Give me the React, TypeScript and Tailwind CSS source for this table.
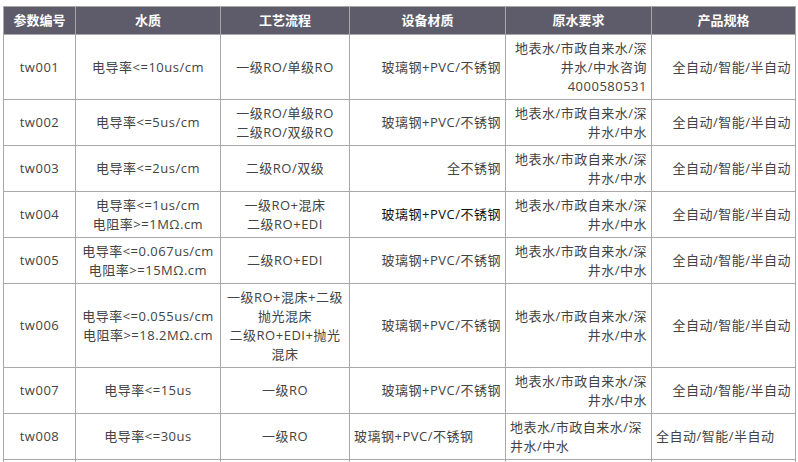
import React from 'react';

type Cell = { lines: string[]; align?: 'left' | 'center' | 'right'; dark?: boolean };

const headers = ['参数编号', '水质', '工艺流程', '设备材质', '原水要求', '产品规格'];

const rawWater = ['地表水/市政自来水/深', '井水/中水'];
const spec = ['全自动/智能/半自动'];
const material = ['玻璃钢+PVC/不锈钢'];

const rows: Cell[][] = [
  [
    { lines: ['tw001'] },
    { lines: ['电导率<=10us/cm'] },
    { lines: ['一级RO/单级RO'] },
    { lines: material, align: 'right' },
    { lines: ['地表水/市政自来水/深', '井水/中水咨询', '4000580531'], align: 'right' },
    { lines: spec, align: 'right' },
  ],
  [
    { lines: ['tw002'] },
    { lines: ['电导率<=5us/cm'] },
    { lines: ['一级RO/单级RO', '二级RO/双级RO'] },
    { lines: material, align: 'right' },
    { lines: rawWater, align: 'right' },
    { lines: spec, align: 'right' },
  ],
  [
    { lines: ['tw003'] },
    { lines: ['电导率<=2us/cm'] },
    { lines: ['二级RO/双级'] },
    { lines: ['全不锈钢'], align: 'right' },
    { lines: rawWater, align: 'right' },
    { lines: spec, align: 'right' },
  ],
  [
    { lines: ['tw004'] },
    { lines: ['电导率<=1us/cm', '电阻率>=1MΩ.cm'] },
    { lines: ['一级RO+混床', '二级RO+EDI'] },
    { lines: material, align: 'right', dark: true },
    { lines: rawWater, align: 'right' },
    { lines: spec, align: 'right' },
  ],
  [
    { lines: ['tw005'] },
    { lines: ['电导率<=0.067us/cm', '电阻率>=15MΩ.cm'] },
    { lines: ['二级RO+EDI'] },
    { lines: material, align: 'right' },
    { lines: rawWater, align: 'right' },
    { lines: spec, align: 'right' },
  ],
  [
    { lines: ['tw006'] },
    { lines: ['电导率<=0.055us/cm', '电阻率>=18.2MΩ.cm'] },
    { lines: ['一级RO+混床+二级', '抛光混床', '二级RO+EDI+抛光', '混床'] },
    { lines: material, align: 'right' },
    { lines: rawWater, align: 'right' },
    { lines: spec, align: 'right' },
  ],
  [
    { lines: ['tw007'] },
    { lines: ['电导率<=15us'] },
    { lines: ['一级RO'] },
    { lines: material, align: 'right' },
    { lines: rawWater, align: 'right' },
    { lines: spec, align: 'right' },
  ],
  [
    { lines: ['tw008'] },
    { lines: ['电导率<=30us'] },
    { lines: ['一级RO'] },
    { lines: material, align: 'left' },
    { lines: rawWater, align: 'left' },
    { lines: spec, align: 'left' },
  ],
];

const alignClass = {
  left: 'text-left',
  center: 'text-center',
  right: 'text-right',
};

export default function App() {
  return (
    <div
      className="min-h-screen bg-white pl-[3px] pt-[6px]"
      style={{ fontFamily: '"Open Sans", "Noto Sans CJK SC", sans-serif' }}
    >
      <table className="w-[792px] table-fixed border-collapse text-[13px] leading-[19px]">
        <colgroup>
          <col className="w-[72px]" />
          <col className="w-[145px]" />
          <col className="w-[129px]" />
          <col className="w-[156px]" />
          <col className="w-[146px]" />
          <col className="w-[144px]" />
        </colgroup>
        <thead>
          <tr className="bg-[#5e5b6a]">
            {headers.map((h) => (
              <th
                key={h}
                className="border border-[#a8a8a8] px-1 py-[4px] text-center font-bold text-white"
              >
                {h}
              </th>
            ))}
          </tr>
        </thead>
        <tbody className="tracking-[0.5px]">
          {rows.map((row, i) => (
            <tr key={i}>
              {row.map((cell, j) => (
                <td
                  key={j}
                  className={`border border-[#a8a8a8] px-1 py-[3.5px] align-middle ${
                    alignClass[cell.align ?? 'center']
                  } ${cell.dark ? 'text-[#111]' : 'text-[#434343]'}`}
                >
                  {cell.lines.map((line, k) => (
                    <div key={k} className="whitespace-nowrap">
                      {line}
                    </div>
                  ))}
                </td>
              ))}
            </tr>
          ))}
          <tr className="h-[46px]">
            {headers.map((h) => (
              <td key={h} className="border border-[#a8a8a8]" />
            ))}
          </tr>
        </tbody>
      </table>
    </div>
  );
}
